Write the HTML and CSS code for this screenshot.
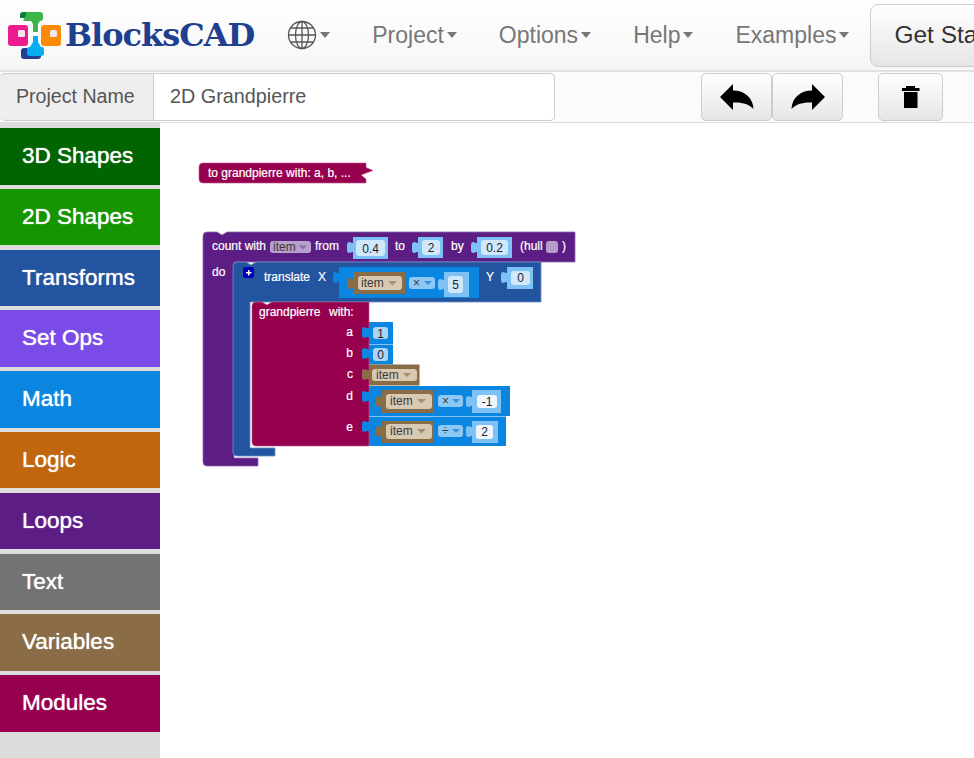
FILE: index.html

```html
<!DOCTYPE html>
<html lang="en">
<head>
  <meta charset="UTF-8">
  <meta name="viewport" content="width=device-width, initial-scale=1.0">
  <title>BlocksCAD</title>
  <link rel="stylesheet" href="styles.css">
</head>
<body>
  <nav class="navbar">
    <div class="brand">
      <svg class="logo" width="56" height="50" viewBox="8 9 56 50">
        <path fill="#0b7f3a" d="M23 11h8v6h-11v-3a3 3 0 0 1 3-3z"/>
        <path fill="#3db54a" d="M26 11h14a3 3 0 0 1 3 3v3a3 3 0 0 1-3 3l-2 3v8h-5v-8l-2-3h-8l3-6z"/>
        <path fill="#1f3f8f" d="M24 47h10v-4h5v4h2v8a3 3 0 0 1-3 3H24a3 3 0 0 1-3-3v-5a3 3 0 0 1 3-3z"/>
        <path fill="#05aef0" d="M33 35h5v6l3 5h1a2 2 0 0 1 2 2v4a3 3 0 0 1-3 3H30a3 3 0 0 1-3-3v-4a2 2 0 0 1 2-2h1l3-5z"/>
        <rect x="8" y="24" width="20" height="21" rx="3" fill="#ee1b8e"/>
        <rect x="41" y="24" width="20" height="21" rx="3" fill="#fb8a05"/>
        <rect x="18" y="29" width="7" height="7" rx="1.500" fill="#f7e6ee"/>
        <rect x="50" y="29" width="7" height="7" rx="1.500" fill="#f7e6ee"/>
      </svg>
      <span class="brand-name">BlocksCAD</span>
    </div>
    <a class="nav-item globe-item">
      <svg class="globe" width="30" height="30" viewBox="0 0 30 30" fill="none" stroke="#555" stroke-width="1.3">
        <circle cx="15" cy="15" r="13.5"/>
        <ellipse cx="15" cy="15" rx="6.5" ry="13.5"/>
        <path d="M15 1.500v27M1.500 15h27M3.500 8h23M3.500 22h23"/>
      </svg>
      <span class="caret"></span>
    </a>
    <a class="nav-item">Project<span class="caret"></span></a>
    <a class="nav-item">Options<span class="caret"></span></a>
    <a class="nav-item">Help<span class="caret"></span></a>
    <a class="nav-item">Examples<span class="caret"></span></a>
    <button class="get-started">Get Started</button>
  </nav>

  <div class="project-bar">
    <div class="name-group">
      <span class="name-label">Project Name</span>
      <input class="name-input" type="text" value="2D Grandpierre">
    </div>
    <div class="tool-group">
      <button class="tool-btn undo-btn">
        <svg width="34" height="26" viewBox="0 0 34 26"><path d="M0 13 13 0V6.500C25 6.500 33 14 33.500 25 29 20 22 18 13 18.500V26z"/></svg>
      </button>
      <button class="tool-btn redo-btn">
        <svg width="34" height="26" viewBox="0 0 34 26"><path d="M34 13 21 0V6.500C9 6.500 1 14 .5 25 5 20 12 18 21 18.500V26z"/></svg>
      </button>
    </div>
    <button class="tool-btn trash-btn">
      <svg width="18" height="22" viewBox="0 0 18 22"><path d="M4 0h9v2h4.500v3H0V2h4z M2 6h13.500v16H2z"/></svg>
    </button>
  </div>

  <div class="main">
    <aside class="toolbox">
      <div class="cat cat-3d">3D Shapes</div>
      <div class="cat cat-2d">2D Shapes</div>
      <div class="cat cat-transforms">Transforms</div>
      <div class="cat cat-setops">Set Ops</div>
      <div class="cat cat-math">Math</div>
      <div class="cat cat-logic">Logic</div>
      <div class="cat cat-loops">Loops</div>
      <div class="cat cat-text">Text</div>
      <div class="cat cat-variables">Variables</div>
      <div class="cat cat-modules">Modules</div>
    </aside>

    <!-- block canvas, viewBox uses page coordinates -->
    <svg class="workspace" width="814" height="635" viewBox="160 123 814 635">
      <defs>
        <path id="tab" d="M7 1H5C4 1 4 0 2 0 1 0 0 1 0 3V8C0 10 1 11 2 11 4 11 4 10 5 10H7z"/>
      </defs>

      <!-- function definition -->
      <path class="mod" d="M203 163H366V167.500L373 170.500 361 175 366 179V183H203a4 4 0 0 1-4-4V167a4 4 0 0 1 4-4z"/>
      <text class="lbl" x="208" y="176.500">to grandpierre with: a, b, ...</text>

      <!-- count loop -->
      <path class="loop" d="M207 232H217l5 3 5-3H575V262H258 234V458H258V466H207a4 4 0 0 1-4-4V236a4 4 0 0 1 4-4z"/>
      <text class="lbl" x="212" y="250">count with</text>
      <rect class="loop-field" x="270" y="241" width="41" height="12" rx="3"/>
      <text class="lbl-dark" x="273" y="251">item</text>
      <path class="arrow-loop" d="M299 245.500h8l-4 4z"/>
      <text class="lbl" x="315" y="250">from</text>
      <use href="#tab" class="val" x="347" y="242"/>
      <rect class="val" x="353" y="237" width="35" height="22"/>
      <rect class="val-in" x="356" y="240" width="29" height="16" rx="3"/>
      <text class="num" x="370.500" y="252.500">0.4</text>
      <text class="lbl" x="395" y="250">to</text>
      <use href="#tab" class="val" x="412" y="242"/>
      <rect class="val" x="418" y="237" width="25" height="21"/>
      <rect class="val-in" x="422" y="240" width="18" height="15" rx="3"/>
      <text class="num" x="431" y="252">2</text>
      <text class="lbl" x="451" y="250">by</text>
      <use href="#tab" class="val" x="471" y="242"/>
      <rect class="val" x="477" y="237" width="35" height="21"/>
      <rect class="val-in" x="481" y="240" width="27" height="15" rx="3"/>
      <text class="num" x="494.500" y="252">0.2</text>
      <text class="lbl" x="520" y="250">(hull</text>
      <rect class="check" x="546" y="241" width="12" height="12" rx="3"/>
      <text class="lbl" x="562" y="250">)</text>
      <text class="lbl" x="212" y="276">do</text>

      <!-- translate -->
      <path class="trans" d="M237 262H246l5 3 5-3H541V302H275 250V448H275V456H237a4 4 0 0 1-4-4V266a4 4 0 0 1 4-4z"/>
      <rect class="mutator" x="243" y="267" width="11" height="11" rx="2"/>
      <path class="plus" d="M248 270h1.500v2h2v1.500h-2v2H248v-2h-2v-1.500h2z"/>
      <text class="lbl" x="264" y="281">translate</text>
      <text class="lbl" x="318" y="281">X</text>
      <use href="#tab" class="math" x="333" y="272"/>
      <rect class="math" x="339" y="267" width="140" height="31"/>
      <use href="#tab" class="var" x="347" y="278"/>
      <rect class="var" x="353" y="272" width="52" height="22"/>
      <rect class="var-in" x="358" y="276" width="44" height="14" rx="3"/>
      <text class="lbl-dark" x="361" y="287">item</text>
      <path class="arrow-var" d="M388 281h9l-4.500 4.500z"/>
      <rect class="op" x="409" y="277" width="26" height="12" rx="3"/>
      <text class="lbl-dark" x="413" y="287">×</text>
      <path class="arrow-op" d="M424 281h8l-4 4z"/>
      <use href="#tab" class="val" x="438" y="279"/>
      <rect class="val" x="444" y="272" width="25" height="25"/>
      <rect class="val-in" x="448" y="276" width="15" height="17" rx="3"/>
      <text class="num" x="455.500" y="289">5</text>
      <text class="lbl" x="486" y="281">Y</text>
      <use href="#tab" class="val" x="501" y="272"/>
      <rect class="val" x="507" y="267" width="26" height="22"/>
      <rect class="val-in" x="511" y="271" width="19" height="14" rx="3"/>
      <text class="num" x="520.500" y="282">0</text>

      <!-- grandpierre call -->
      <path class="mod" d="M256 302H262l5 3 5-3H369V446H256a4 4 0 0 1-4-4V306a4 4 0 0 1 4-4z"/>
      <text class="lbl" x="259" y="316">grandpierre</text>
      <text class="lbl" x="329" y="316">with:</text>
      <text class="lbl end" x="353" y="336">a</text>
      <text class="lbl end" x="353" y="357">b</text>
      <text class="lbl end" x="353" y="378">c</text>
      <text class="lbl end" x="353" y="400">d</text>
      <text class="lbl end" x="353" y="431">e</text>

      <use href="#tab" class="math" x="362" y="327"/>
      <rect class="math" x="369" y="322" width="24" height="22"/>
      <rect class="math-in" x="373" y="327" width="15" height="12" rx="3"/>
      <text class="num" x="380.500" y="337.500">1</text>

      <use href="#tab" class="math" x="362" y="348"/>
      <rect class="math" x="369" y="344.500" width="24" height="20"/>
      <rect class="math-in" x="373" y="348" width="15" height="13" rx="3"/>
      <text class="num" x="380.500" y="358.500">0</text>

      <use href="#tab" class="var" x="362" y="369"/>
      <rect class="var" x="369" y="364.500" width="50.500" height="21"/>
      <rect class="var-in" x="372" y="369" width="45" height="12" rx="3"/>
      <text class="lbl-dark" x="376" y="379">item</text>
      <path class="arrow-var" d="M403 373h8l-4 4z"/>

      <use href="#tab" class="math" x="362" y="391"/>
      <rect class="math" x="369" y="386" width="141" height="30"/>
      <use href="#tab" class="var" x="376" y="396"/>
      <rect class="var" x="382" y="390" width="52" height="23"/>
      <rect class="var-in" x="386" y="394" width="46" height="15" rx="3"/>
      <text class="lbl-dark" x="390" y="405">item</text>
      <path class="arrow-var" d="M417 399h9l-4.500 4.500z"/>
      <rect class="op" x="438" y="395" width="25" height="12" rx="3"/>
      <text class="lbl-dark" x="442" y="405">×</text>
      <path class="arrow-op" d="M452 399h8l-4 4z"/>
      <use href="#tab" class="val" x="466" y="396"/>
      <rect class="val" x="472" y="390" width="29" height="23"/>
      <rect class="val-in pale" x="477" y="395" width="20" height="13" rx="3"/>
      <text class="num" x="487" y="406">-1</text>

      <use href="#tab" class="math" x="362" y="421"/>
      <rect class="math" x="369" y="416.500" width="137" height="29.500"/>
      <use href="#tab" class="var" x="376" y="426"/>
      <rect class="var" x="382" y="421" width="52" height="22"/>
      <rect class="var-in" x="386" y="424" width="46" height="15" rx="3"/>
      <text class="lbl-dark" x="390" y="435">item</text>
      <path class="arrow-var" d="M417 429h9l-4.500 4.500z"/>
      <rect class="op" x="438" y="425" width="25" height="12" rx="3"/>
      <text class="lbl-dark" x="442" y="435">÷</text>
      <path class="arrow-op" d="M452 429h8l-4 4z"/>
      <use href="#tab" class="val" x="466" y="426"/>
      <rect class="val" x="472" y="421" width="26" height="22"/>
      <rect class="val-in pale" x="476" y="425" width="17" height="14" rx="3"/>
      <text class="num" x="484.500" y="436">2</text>
    </svg>
  </div>
</body>
</html>
```

FILE: styles.css

```css
* {
  box-sizing: border-box;
}
html, body {
  height: 100%;
}
body {
  margin: 0;
  overflow: hidden;
  font-family: "Liberation Sans", Arial, sans-serif;
  background-color: #fff;
  color: #333;
}

/* top nav */
.navbar {
  display: flex;
  align-items: center;
  height: 72px;
  width: 1100px;
  padding-left: 8px;
  background: linear-gradient(to bottom, #fff, #f6f6f6);
  border-bottom: 2px solid #e2e2e2;
}
.brand {
  display: flex;
  align-items: center;
}
.logo {
  display: block;
}
.brand-name {
  margin-left: 1px;
  font-family: "DejaVu Serif", serif;
  font-weight: bold;
  font-size: 32px;
  letter-spacing: -1px;
  color: #1f3f8f;
}
.nav-item {
  display: flex;
  align-items: center;
  font-size: 23px;
  color: #777;
  margin-left: 42px;
}
.globe-item {
  margin-left: 33px;
}
.globe {
  display: block;
}
.caret {
  display: inline-block;
  width: 0;
  height: 0;
  margin-left: 3px;
  border-top: 6px solid #777;
  border-left: 5.500px solid transparent;
  border-right: 5.500px solid transparent;
}
.get-started {
  height: 63px;
  width: 200px;
  margin-left: 21px;
  padding: 0 0 0 23px;
  text-align: left;
  font-family: inherit;
  font-size: 24.500px;
  color: #333;
  border: 1px solid #ccc;
  border-radius: 8px;
  background: linear-gradient(to bottom, #fff, #e6e6e6);
}

/* project name row */
.project-bar {
  display: flex;
  align-items: flex-start;
  height: 51px;
  padding-top: 1px;
  background-color: #fbfbfb;
  border-bottom: 1px solid #ddd;
}
.name-group {
  display: flex;
  width: 555px;
  height: 48px;
}
.name-label {
  width: 154px;
  padding-left: 16px;
  line-height: 45px;
  font-size: 19.600px;
  color: #555;
  background-color: #eee;
  border: 1px solid #ccc;
  border-left: none;
  border-radius: 5px 0 0 5px;
}
.name-input {
  flex: 1;
  padding: 0 16px 2px;
  font-family: inherit;
  font-size: 19.800px;
  color: #555;
  background-color: #fff;
  border: 1px solid #ccc;
  border-left: none;
  border-radius: 0 5px 5px 0;
}
.tool-group {
  display: flex;
  margin-left: 146px;
}
.tool-btn {
  display: flex;
  align-items: center;
  justify-content: center;
  width: 71px;
  height: 48px;
  padding: 0;
  border: 1px solid #ccc;
  border-radius: 5px;
  background: linear-gradient(to bottom, #fff, #e6e6e6);
}
.trash-btn {
  width: 65px;
  margin-left: 35px;
}

/* toolbox + canvas */
.main {
  display: flex;
  height: 635px;
}
.toolbox {
  display: flex;
  flex-direction: column;
  gap: 4.300px;
  width: 160px;
  flex-shrink: 0;
  padding-top: 5px;
  background-color: #ddd;
}
.cat {
  height: 56.500px;
  padding-left: 22px;
  line-height: 56px;
  font-size: 22.500px;
  color: #fff;
  text-shadow: 0 0 1px #fff;
}
.cat-3d { background-color: #006400; }
.cat-2d { background-color: #159600; }
.cat-transforms { background-color: #23549f; }
.cat-setops { background-color: #7a4be6; }
.cat-math { background-color: #0a86e0; }
.cat-logic { background-color: #c0660f; }
.cat-loops { background-color: #5c1d85; }
.cat-text { background-color: #737373; }
.cat-variables { background-color: #8a6d46; }
.cat-modules { background-color: #97004f; }

.workspace {
  display: block;
  flex-shrink: 0;
  background-color: #fff;
}
.workspace text {
  font-family: "Liberation Sans", Arial, sans-serif;
  font-size: 12px;
}
.lbl {
  fill: #fff;
  stroke: #fff;
  stroke-width: 0.2;
}
.lbl-dark { fill: #3a3a3a; }
.end { text-anchor: end; }
.workspace .num {
  fill: #222;
  text-anchor: middle;
}
.mod { fill: #97004f; stroke: #b8588f; stroke-width: 0.6; }
.loop { fill: #5c1d85; stroke: #8f68ab; stroke-width: 0.8; }
.trans { fill: #23549f; stroke: #6f90c2; stroke-width: 0.8; }
.math { fill: #0a86e0; }
.val { fill: #7dc1f5; }
.val-in { fill: #cfe8fc; }
.math-in { fill: #a9d6f8; }
.pale { fill: #eef7fe; }
.var { fill: #8a6d46; }
.var-in { fill: #d8c9b2; }
.op { fill: #8ec9f6; }
.loop-field { fill: #b99fcb; }
.check { fill: #b89cc9; }
.mutator { fill: #0000b8; }
.plus { fill: #fff; }
.arrow-loop { fill: #8a6da5; }
.arrow-var { fill: #a58f70; }
.arrow-op { fill: #3f8fe0; }
```
